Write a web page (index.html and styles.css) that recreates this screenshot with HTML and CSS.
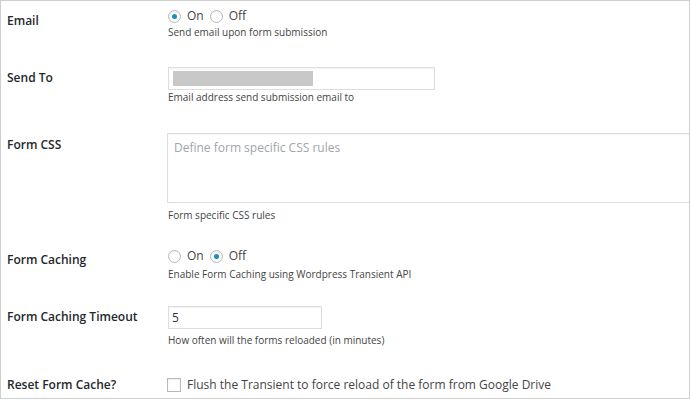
FILE: index.html
```html
<!DOCTYPE html>
<html>
<head>
<meta charset="utf-8">
<link rel="stylesheet" href="styles.css">
</head>
<body>
<div class="panel">
  <div class="row row-email">
    <div class="label label-radio">Email</div>
    <div class="field">
      <div class="choices">
        <label class="choice"><input type="radio" class="radio" name="email" checked><span>On</span></label>
        <label class="choice"><input type="radio" class="radio" name="email"><span>Off</span></label>
      </div>
      <div class="desc">Send email upon form submission</div>
    </div>
  </div>

  <div class="row row-sendto">
    <div class="label label-text">Send To</div>
    <div class="field">
      <div class="input input-wide"><span class="redacted"></span></div>
      <div class="desc">Email address send submission email to</div>
    </div>
  </div>

  <div class="row row-css">
    <div class="label label-area">Form CSS</div>
    <div class="field">
      <div class="textarea"><span class="placeholder">Define form specific CSS rules</span></div>
      <div class="desc desc-area">Form specific CSS rules</div>
    </div>
  </div>

  <div class="row row-caching">
    <div class="label label-radio2">Form Caching</div>
    <div class="field">
      <div class="choices">
        <label class="choice"><input type="radio" class="radio" name="cache"><span>On</span></label>
        <label class="choice"><input type="radio" class="radio" name="cache" checked><span>Off</span></label>
      </div>
      <div class="desc desc-radio2">Enable Form Caching using Wordpress Transient API</div>
    </div>
  </div>

  <div class="row row-timeout">
    <div class="label label-text">Form Caching Timeout</div>
    <div class="field">
      <div class="input input-small"><span class="value">5</span></div>
      <div class="desc desc-input2">How often will the forms reloaded (in minutes)</div>
    </div>
  </div>

  <div class="row row-reset">
    <div class="label label-check">Reset Form Cache?</div>
    <div class="field">
      <label class="choice"><input type="checkbox" class="checkbox"><span>Flush the Transient to force reload of the form from Google Drive</span></label>
    </div>
  </div>
</div>
</body>
</html>
```

FILE: styles.css
```css
html, body {
  margin: 0;
  padding: 0;
  background: #ffffff;
}

body {
  font-family: "Open Sans", "Noto Sans", sans-serif;
  color: #333;
}

.panel {
  box-sizing: border-box;
  width: 690px;
  height: 399px;
  border: 1px solid #cfcfcf;
  overflow: hidden;
  padding-left: 6px;
}

.row {
  display: grid;
  grid-template-columns: 161px 600px;
}

.label {
  font-size: 12px;
  line-height: 18px;
  font-weight: 600;
  color: #23282d;
}

.label-radio { padding-top: 5px; }
.label-radio2 { padding-top: 4px; }
.label-text { padding-top: 2px; }
.label-area { padding-top: 3px; }
.label-check { padding-top: 0; }

.field {
  display: flex;
  flex-direction: column;
  align-items: flex-start;
}

.row-email { margin-top: 6px; }
.row-sendto { margin-top: 28px; }
.row-css { margin-top: 29px; }
.row-caching { margin-top: 25px; }
.row-timeout { margin-top: 25px; }
.row-reset { margin-top: 29px; }

.choices {
  display: flex;
  gap: 6px;
  height: 18px;
  align-items: center;
}

.choice {
  display: flex;
  align-items: center;
  gap: 6px;
  font-size: 12px;
  line-height: 18px;
  color: #444;
}

.radio {
  appearance: none;
  -webkit-appearance: none;
  box-sizing: border-box;
  margin: 0;
  width: 13px;
  height: 13px;
  border: 1px solid #b4b9be;
  border-radius: 50%;
  background: #fff;
  box-shadow: inset 0 1px 2px rgba(0, 0, 0, 0.07);
  display: grid;
  place-items: center;
}

.radio:checked::before {
  content: "";
  width: 5px;
  height: 5px;
  border-radius: 50%;
  background: #1e8cbe;
}

.checkbox {
  appearance: none;
  -webkit-appearance: none;
  box-sizing: border-box;
  margin: 0 0 0 -1px;
  width: 14px;
  height: 14px;
  border: 1px solid #b4b9be;
  background: #fff;
  box-shadow: inset 0 1px 2px rgba(0, 0, 0, 0.07);
}

.desc {
  font-size: 10px;
  line-height: 14px;
  color: #444;
}

.desc-area { margin-top: 5px; }
.desc-radio2 { margin-top: 2px; }
.desc-input2 { margin-top: 4px; }

.input {
  box-sizing: border-box;
  height: 23px;
  border: 1px solid #dddddd;
  box-shadow: inset 0 1px 2px rgba(0, 0, 0, 0.05);
  background: #fff;
  display: flex;
  align-items: center;
  padding: 0 3px;
}

.input-wide { width: 267px; }
.input-small { width: 154px; }

.redacted {
  display: block;
  width: 140px;
  height: 15px;
  margin-left: 1px;
  background: #c8c8c8;
}

.value {
  font-size: 12px;
  color: #333;
}

.textarea {
  box-sizing: border-box;
  width: 560px;
  height: 70px;
  margin-left: -1px;
  border: 1px solid #dddddd;
  box-shadow: inset 0 1px 2px rgba(0, 0, 0, 0.05);
  padding: 1px 6px;
}

.placeholder {
  font-size: 12px;
  line-height: 18px;
  color: #a0a5aa;
}
```
